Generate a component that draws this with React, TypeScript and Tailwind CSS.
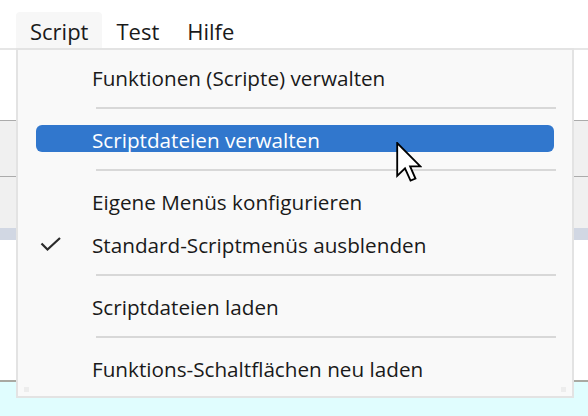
const font = "font-['Segoe_UI','Open_Sans',sans-serif]";

type Entry = { label: string; active?: boolean; checked?: boolean } | 'sep';

const entries: Entry[] = [
  { label: 'Funktionen (Scripte) verwalten' },
  'sep',
  { label: 'Scriptdateien verwalten', active: true },
  'sep',
  { label: 'Eigene Menüs konfigurieren' },
  { label: 'Standard-Scriptmenüs ausblenden', checked: true },
  'sep',
  { label: 'Scriptdateien laden' },
  'sep',
  { label: 'Funktions-Schaltflächen neu laden' },
];

function Cursor() {
  return (
    <svg className="absolute left-[396px] top-[142px]" width="26" height="40" viewBox="0 0 12.5 19.5">
      <path
        d="M0.5 0.5 L0.5 16.5 L4.3 12.8 L7 18.8 L9.4 17.8 L6.8 11.9 L11.8 11.9 Z"
        fill="#fff"
        stroke="#000"
        strokeWidth="0.9"
        strokeLinejoin="miter"
      />
    </svg>
  );
}

function ScriptMenu() {
  return (
    <div className="absolute left-[16px] top-[48px] w-[558px] h-[350px] border-2 border-[#e3e3e3] bg-[#f9f9f9] pt-[5px]">
      {entries.map((e, i) =>
        e === 'sep' ? (
          <div key={i} className="flex h-[19px] items-center pl-[78px] pr-[16px]">
            <div className="h-[2px] w-full bg-[#d8d8d8]" />
          </div>
        ) : (
          <div key={i} className="relative flex h-[43px] items-center">
            {e.active && (
              <div className="absolute left-[18px] right-[18px] top-[8px] h-[27px] rounded-[6px] bg-[#3177cd]" />
            )}
            {e.checked && (
              <svg className="absolute left-[22px] top-[14px]" width="22" height="16" viewBox="0 0 22 16">
                <path d="M1.5 7.5 L7.5 13.5 L20 2" fill="none" stroke="#2a2a2a" strokeWidth="2.2" />
              </svg>
            )}
            <span
              className={`relative pl-[74px] pt-[3px] text-[20.7px] leading-none ${
                e.active ? 'text-white' : 'text-[#1a1a1a]'
              }`}
            >
              {e.label}
            </span>
          </div>
        )
      )}
      <div className="absolute left-[6px] bottom-[4px] h-[5px] w-[5px] bg-[#ededed]" />
      <div className="absolute right-[6px] bottom-[4px] h-[5px] w-[5px] bg-[#ededed]" />
    </div>
  );
}

export default function App() {
  return (
    <div className={`relative h-[416px] w-[588px] overflow-hidden bg-white ${font}`}>
      <div className="flex h-[48px] items-end pl-[16px]">
        {['Script', 'Test', 'Hilfe'].map((m, i) => (
          <div
            key={m}
            className={`flex h-[36px] items-center px-[14px] pt-[3px] text-[22px] text-[#1a1a1a] ${
              i === 0 ? 'rounded-t-[4px] bg-[#f7f7f7]' : ''
            }`}
          >
            {m}
          </div>
        ))}
      </div>
      <div className="h-[2px] bg-[#e6e6e6]" />
      <div className="h-[70px] bg-white" />
      <div className="h-[1px] bg-[#ababab]" />
      <div className="h-[55px] bg-[#f0f0f0]" />
      <div className="h-[1px] bg-[#ababab]" />
      <div className="h-[51px] bg-[#f0f0f0]" />
      <div className="h-[12px] bg-[#d1d7e3]" />
      <div className="h-[140px] bg-white" />
      <div className="h-[2px] bg-[#a9a9a2]" />
      <div className="h-[34px] bg-[#e0fdfe]" />
      <ScriptMenu />
      <Cursor />
    </div>
  );
}
